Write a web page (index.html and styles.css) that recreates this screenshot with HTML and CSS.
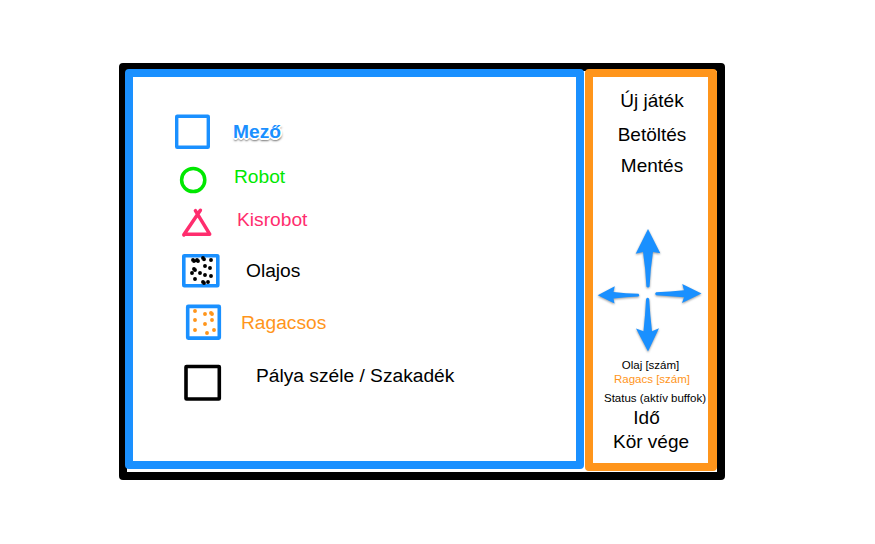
FILE: index.html
```
<!DOCTYPE html>
<html lang="hu">
<head>
<meta charset="utf-8">
<title>Robot</title>
<link rel="stylesheet" href="styles.css">
</head>
<body>
<main class="frame">
  <section class="board">
    <ul class="legend">
      <li class="row mezo">
        <svg class="icon" viewBox="170 110 60 46"><rect x="176.7" y="116.3" width="31.6" height="31" rx=".5" fill="none" stroke="#1a90ff" stroke-width="3.4"/></svg>
        <span class="label">Mező</span>
      </li>
      <li class="row robot">
        <svg class="icon" viewBox="170 156 60 45"><circle cx="193.2" cy="180" r="11.6" fill="none" stroke="#00e800" stroke-width="3.5"/></svg>
        <span class="label">Robot</span>
      </li>
      <li class="row kisrobot">
        <svg class="icon" viewBox="170 201 60 44"><path d="M200.4 210.3L183.8 234.8M183.8 235L184.5 234.2H209.7L195.4 210.7" fill="none" stroke="#ff2d6e" stroke-width="3.5" stroke-linecap="round" stroke-linejoin="round"/></svg>
        <span class="label">Kisrobot</span>
      </li>
      <li class="row olajos">
        <svg class="icon" viewBox="170 245 60 52"><rect x="183.8" y="255.7" width="34" height="30" rx=".5" fill="none" stroke="#1a90ff" stroke-width="3.6"/>
          <path d="M193 260h0M194 261h0M197 260h0M198 261h0M203 258h0M204 259.2h0M211 260h0M205 266h0M210 268h0M194 269h0M195 270h0M192 273h0M200 273h0M205 275h0M211 276h0M195 279h0M203 282h0M204 283h0M208 282h0" stroke="#000" stroke-width="3.9" stroke-linecap="round"/></svg>
        <span class="label">Olajos</span>
      </li>
      <li class="row ragacsos">
        <svg class="icon" viewBox="170 297 60 53"><rect x="187.7" y="306.4" width="31.6" height="31.7" rx=".5" fill="none" stroke="#1a90ff" stroke-width="3.6"/>
          <path d="M195 311h0M205 314h0M211 313h0M212 314h0M195 320h0M212 320h0M205 324h0M195 330h0M214 330h0M207 333h0" stroke="#ff951b" stroke-width="3.9" stroke-linecap="round"/></svg>
        <span class="label">Ragacsos</span>
      </li>
      <li class="row szakadek">
        <svg class="icon" viewBox="170 350 60 60"><rect x="186" y="366.5" width="33.3" height="32.5" rx=".5" fill="none" stroke="#000" stroke-width="3.6"/></svg>
        <span class="label">Pálya széle / Szakadék</span>
      </li>
    </ul>
  </section>
  <aside class="panel">
    <div class="item new">Új játék</div>
    <div class="item load">Betöltés</div>
    <div class="item save">Mentés</div>
    <svg class="arrows" viewBox="593 220 115 137">
      <g fill="#1a90ff">
        <path d="M648 229L660.3 253.2L653 252Q650.5 268 649.6 286.5Q648 288.3 646.4 286.5Q645.5 268 643 252L635.7 253.8Z"/>
        <path d="M648 351.5L659 328.3L652 331.2Q650 314 649.2 299Q647.7 296.7 646.1 299Q645.3 314 643.5 331.2L636 328.5Z"/>
        <path d="M597.7 295.2L614.8 286.2L613.5 292Q626 293.8 638.5 293.8Q640.2 295.3 638.5 296.6Q626 297 613.5 298.5L614.5 303.5Z"/>
        <path d="M701.5 293.5L682.2 284L684 290.3Q670 291.7 656.2 292.2Q654.2 293.8 656.2 295.3Q670 296.2 684 297.3L682 303Z"/>
      </g>
    </svg>
    <div class="small oil">Olaj [szám]</div>
    <div class="small glue">Ragacs [szám]</div>
    <div class="small status">Status (aktív buffok)</div>
    <div class="item time">Idő</div>
    <div class="item end">Kör vége</div>
  </aside>
</main>
</body>
</html>
```

FILE: styles.css
```
* {
  box-sizing: border-box;
}

body {
  margin: 0;
  padding: 63px 0 0 119px;
  background: #fff;
  color: #000;
  font: 19px/22px "Liberation Sans", Arial, sans-serif;
}

.frame {
  display: flex;
  align-items: flex-start;
  width: 606px;
  height: 417px;
  border: 8px solid #000;
  border-radius: 4px;
}

.board {
  flex: none;
  width: 459px;
  height: 400px;
  margin: -2px 1px 0 -2px;
  padding: 33px 0 0 37px;
  border: 8px solid #1a90ff;
  border-radius: 4px;
}

.legend {
  margin: 0;
  padding: 0;
  list-style: none;
}

.row {
  display: flex;
  align-items: flex-start;
}

.icon {
  flex: none;
  width: 60px;
  height: 100%;
}

.label {
  font-size: 19.2px;
  white-space: nowrap;
}

.mezo { height: 46px; color: #1a90ff; }
.mezo .label {
  margin: 11px 0 0 3px;
  font-weight: bold;
  text-shadow:
    2px 0 #fff, -2px 0 #fff, 0 2px #fff, 0 -2px #fff,
    1px 1px #fff, -1px 1px #fff, 1px -1px #fff, -1px -1px #fff,
    0 3px 2px rgba(0, 0, 0, .5), 2px 2px 2px rgba(0, 0, 0, .3);
}

.robot { height: 45px; color: #00e800; }
.robot .label { margin: 10px 0 0 4px; }

.kisrobot { height: 44px; color: #ff2d6e; }
.kisrobot .label { margin: 8px 0 0 7px; }

.olajos { height: 52px; }
.olajos .label { margin: 15px 0 0 16px; }

.ragacsos { height: 53px; color: #ff951b; }
.ragacsos .label { margin: 15px 0 0 11px; }

.szakadek { height: 60px; }
.szakadek .label { margin: 15px 0 0 26px; }

.panel {
  flex: none;
  display: flex;
  flex-direction: column;
  width: 132px;
  height: 402px;
  margin-top: -2px;
  padding-top: 13px;
  border: 8px solid #ff951b;
  border-right-width: 9px;
  border-radius: 4px;
  text-align: center;
  white-space: nowrap;
}

.item {
  flex: none;
  height: 22px;
  padding-left: 3px;
}

.load { margin-top: 12px; }
.save { margin-top: 9px; }

.arrows {
  flex: none;
  width: 115px;
  height: 137px;
  margin-top: 43px;
  filter: drop-shadow(0 1px 1px rgba(0, 0, 0, .4));
}

.small {
  flex: none;
  height: 14px;
  font-size: 11.5px;
  line-height: 14px;
}

.oil { margin-top: 1px; }
.glue { padding-left: 3px; color: #ff951b; }
.status { margin: 5px 0 0 9px; }
.time { margin-top: 2px; padding: 0 8px 0 0; }
.end { margin-top: 2px; padding-left: 1px; }
```
